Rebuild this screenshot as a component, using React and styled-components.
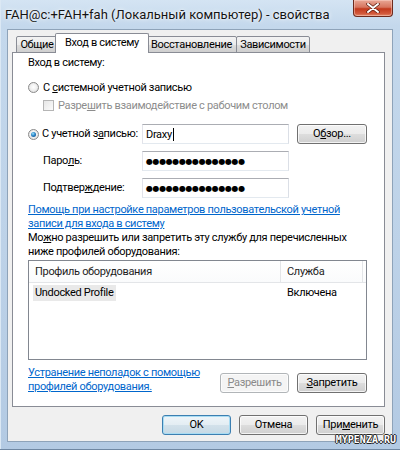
import styled, { createGlobalStyle } from "styled-components";

const GlobalStyle = createGlobalStyle`
  html, body {
    margin: 0;
    padding: 0;
    background: #b9cfe6;
  }
  body {
    font-family: Roboto, "Noto Sans", sans-serif;
    font-size: 11px;
    letter-spacing: -0.32px;
    color: #000;
  }
  * {
    box-sizing: border-box;
  }
`;

const tabs = [
    { title: "Общие", width: 42 },
    { title: "Вход в систему", width: 94, active: true },
    { title: "Восстановление", width: 91 },
    { title: "Зависимости", width: 74 },
];

function App() {
    return (
        <>
            <GlobalStyle />
            <Window>
                <TitleBar>
                    <Title>FAH@c:+FAH+fah (Локальный компьютер) - свойства</Title>
                    <CloseButton>
                        <svg width="14" height="10" viewBox="0 0 14 10">
                            <path
                                d="M2 1 L12 9 M12 1 L2 9"
                                stroke="#5a1c10"
                                strokeWidth="3.4"
                                strokeLinecap="round"
                            />
                            <path
                                d="M2 1 L12 9 M12 1 L2 9"
                                stroke="#fff"
                                strokeWidth="2"
                                strokeLinecap="round"
                            />
                        </svg>
                    </CloseButton>
                </TitleBar>

                <Client>
                    <TabStrip>
                        {tabs.map((t) => (
                            <Tab key={t.title} $width={t.width} $active={t.active}>
                                {t.title}
                            </Tab>
                        ))}
                    </TabStrip>

                    <Panel>
                        <Text>Вход в систему:</Text>

                        <OptionRow $top={10}>
                            <Radio />
                            <span>
                                С <Key>с</Key>истемной учетной записью
                            </span>
                        </OptionRow>

                        <OptionRow $top={4} $indent={15} $disabled>
                            <CheckBox />
                            <span>
                                Разре<Key>ш</Key>ить взаимодействие с рабочим столом
                            </span>
                        </OptionRow>

                        <Fields>
                            <FieldRow>
                                <FieldLabel>
                                    <Radio $checked />
                                    <span>
                                        С учетной з<Key>а</Key>писью:
                                    </span>
                                </FieldLabel>
                                <TextBox>
                                    Draxy<Caret />
                                </TextBox>
                                <Button $width={70}>
                                    О<Key>б</Key>зор...
                                </Button>
                            </FieldRow>
                            <FieldRow>
                                <FieldLabel $indent={15}>
                                    <span>
                                        Паро<Key>л</Key>ь:
                                    </span>
                                </FieldLabel>
                                <TextBox $password>●●●●●●●●●●●●●●●</TextBox>
                            </FieldRow>
                            <FieldRow>
                                <FieldLabel $indent={15}>
                                    <span>
                                        Подтвер<Key>ж</Key>дение:
                                    </span>
                                </FieldLabel>
                                <TextBox $password>●●●●●●●●●●●●●●●</TextBox>
                            </FieldRow>
                        </Fields>

                        <Link $top={5}>
                            Помощь при настройке параметров пользовательской учетной
                            <br />
                            записи для входа в систему
                        </Link>

                        <Paragraph>
                            Мо<Key>ж</Key>но разрешить или запретить эту службу для перечисленных
                            <br />
                            ниже профилей оборудования:
                        </Paragraph>

                        <ListBox>
                            <ListHeader>
                                <HeaderCell $width={252}>Профиль оборудования</HeaderCell>
                                <HeaderCell $width={82}>Служба</HeaderCell>
                            </ListHeader>
                            <ListRow>
                                <RowCell $width={252}>
                                    <Selection>Undocked Profile</Selection>
                                </RowCell>
                                <RowCell $width={82}>Включена</RowCell>
                            </ListRow>
                        </ListBox>

                        <BottomRow>
                            <Link>
                                Устранение неполадок с помощью
                                <br />
                                профилей оборудования.
                            </Link>
                            <ButtonGroup>
                                <Button $disabled>
                                    <Key>Р</Key>азрешить
                                </Button>
                                <Button $width={70}>
                                    <Key>З</Key>апретить
                                </Button>
                            </ButtonGroup>
                        </BottomRow>
                    </Panel>

                    <Footer>
                        <Button $default>OK</Button>
                        <Button>Отмена</Button>
                        <Button>
                            При<Key>м</Key>енить
                        </Button>
                    </Footer>
                </Client>

                <Watermark>MYPENZA.RU</Watermark>
            </Window>
        </>
    );
}

export default App;

const Window = styled.div`
    position: relative;
    width: 400px;
    height: 450px;
    display: flex;
    flex-direction: column;
    background: linear-gradient(180deg, #d4e4f3 0px, #c4d8ec 26px, #bdd2e8 55%, #b3cae3 100%);
    box-shadow: inset 0 -1px 0 #6f87a2, inset 1px 0 0 #dbe8f4;
    overflow: hidden;
`;

const TitleBar = styled.div`
    height: 29px;
    display: flex;
    align-items: flex-start;
    padding: 0 7px 0 5px;
`;

const Title = styled.div`
    padding-top: 6px;
    font-size: 13px;
    letter-spacing: 0;
    line-height: 18px;
    color: #141414;
    text-shadow: 0 0 5px rgba(255, 255, 255, 0.9), 0 0 2px rgba(255, 255, 255, 0.8);
    white-space: nowrap;
`;

const CloseButton = styled.div`
    margin-left: auto;
    width: 40px;
    height: 17px;
    display: flex;
    align-items: center;
    justify-content: center;
    border: 1px solid #6d2a1d;
    border-top: none;
    border-radius: 0 0 4px 4px;
    background: linear-gradient(180deg, #e9a796 0%, #d7755f 45%, #c2391d 55%, #d2593c 85%, #e28a6b 100%);
    box-shadow: inset 0 0 0 1px rgba(255, 220, 210, 0.45);
`;

const Client = styled.div`
    flex: 1;
    margin: 0 7px 8px;
    display: flex;
    flex-direction: column;
    background: #f0f0f0;
    border: 1px solid #8ea3b9;
    padding: 3px 7px 0 4px;
`;

const TabStrip = styled.div`
    height: 19px;
    display: flex;
    align-items: flex-start;
    padding-left: 4px;
`;

const Tab = styled.div`
    position: relative;
    width: ${(p) => p.$width}px;
    height: ${(p) => (p.$active ? 20 : 17)}px;
    margin-top: ${(p) => (p.$active ? 0 : 3)}px;
    margin-left: ${(p) => (p.$active ? -3 : -1)}px;
    margin-right: ${(p) => (p.$active ? -2 : 0)}px;
    z-index: ${(p) => (p.$active ? 2 : 1)};
    display: flex;
    align-items: ${(p) => (p.$active ? "flex-start" : "center")};
    justify-content: center;
    padding-top: ${(p) => (p.$active ? 2 : 0)}px;
    border: 1px solid #898c95;
    border-bottom: ${(p) => (p.$active ? "none" : "1px solid #898c95")};
    border-radius: 2px 2px 0 0;
    background: ${(p) =>
        p.$active ? "#ffffff" : "linear-gradient(180deg, #f3f3f3 0%, #ebebeb 50%, #dddddd 51%, #cfcfcf 100%)"};
    line-height: 14px;
    white-space: nowrap;

    &:first-child {
        margin-left: 0;
    }
`;

const Panel = styled.div`
    height: 355px;
    display: flex;
    flex-direction: column;
    background: #ffffff;
    border: 1px solid #898c95;
    padding: 3px 17px 0 15px;
`;

const Text = styled.div`
    line-height: 14px;
`;

const Key = styled.span`
    text-decoration: underline;
`;

const OptionRow = styled.div`
    display: flex;
    align-items: center;
    gap: 4px;
    height: 14px;
    margin-top: ${(p) => p.$top || 0}px;
    padding-left: ${(p) => p.$indent || 0}px;
    color: ${(p) => (p.$disabled ? "#8d8d8d" : "#000")};
`;

const Radio = styled.span`
    position: relative;
    flex: none;
    width: 11px;
    height: 11px;
    border-radius: 50%;
    border: 1px solid #8a8a8a;
    background: radial-gradient(circle at 50% 45%, #ffffff 0%, #f1f1f1 45%, #d3d3d3 100%);

    &::after {
        content: "";
        display: ${(p) => (p.$checked ? "block" : "none")};
        position: absolute;
        left: 2px;
        top: 2px;
        width: 5px;
        height: 5px;
        border-radius: 50%;
        background: radial-gradient(circle at 40% 35%, #9be3fb 0%, #2b86c9 45%, #0b3f78 100%);
    }
`;

const CheckBox = styled.span`
    flex: none;
    width: 11px;
    height: 11px;
    border: 1px solid #b5b5b5;
    background: linear-gradient(135deg, #e6e6e6, #fbfbfb);
`;

const Fields = styled.div`
    display: flex;
    flex-direction: column;
    gap: 7px;
    margin-top: 12px;
`;

const FieldRow = styled.div`
    display: flex;
    align-items: center;
    height: 20px;
`;

const FieldLabel = styled.div`
    width: 114px;
    display: flex;
    align-items: center;
    gap: 3px;
    padding-left: ${(p) => p.$indent || 0}px;
    line-height: 14px;
    white-space: nowrap;
`;

const TextBox = styled.div`
    width: 147px;
    height: 20px;
    margin-right: 8px;
    display: flex;
    align-items: center;
    padding-left: 3px;
    background: #ffffff;
    border: 1px solid;
    border-color: #abadb3 #dbdfe6 #e3e9ef #e2e3ea;
    font-family: ${(p) => (p.$password ? '"DejaVu Sans", sans-serif' : "inherit")};
    font-size: ${(p) => (p.$password ? "8px" : "11px")};
    letter-spacing: ${(p) => (p.$password ? "-0.4px" : "-0.32px")};
    white-space: nowrap;
    overflow: hidden;
`;

const Caret = styled.span`
    display: inline-block;
    width: 1px;
    height: 13px;
    margin-left: 1px;
    background: #000;
`;

const Link = styled.div`
    margin-top: ${(p) => p.$top || 0}px;
    line-height: 14px;
    color: #0066cc;
    text-decoration: underline;
    white-space: nowrap;
`;

const Paragraph = styled.div`
    line-height: 14px;
    white-space: nowrap;
`;

const ListBox = styled.div`
    margin-top: 1px;
    height: 100px;
    flex: none;
    background: #ffffff;
    border: 1px solid #828790;
`;

const ListHeader = styled.div`
    display: flex;
    height: 22px;
    border-bottom: 1px solid #e3e5e8;
    background: linear-gradient(180deg, #ffffff 0%, #fafbfc 100%);
`;

const HeaderCell = styled.div`
    width: ${(p) => p.$width}px;
    display: flex;
    align-items: center;
    padding-left: 6px;
    border-right: 1px solid #e3e5e8;
    color: #1e1e1e;
`;

const ListRow = styled.div`
    display: flex;
    margin-top: 2px;
    height: 16px;
`;

const RowCell = styled.div`
    width: ${(p) => p.$width}px;
    display: flex;
    align-items: center;
    padding-left: 4px;
    line-height: 16px;

    & + & {
        padding-left: 6px;
    }
`;

const Selection = styled.span`
    padding: 0 3px 0 2px;
    background: #e9e9e9;
`;

const BottomRow = styled.div`
    display: flex;
    justify-content: space-between;
    align-items: flex-start;
    margin-top: 6px;
`;

const ButtonGroup = styled.div`
    display: flex;
    gap: 8px;
    margin-top: 7px;
`;

const Button = styled.div`
    width: ${(p) => p.$width || 69}px;
    height: 20px;
    display: flex;
    align-items: center;
    justify-content: center;
    border: 1px solid ${(p) => (p.$disabled ? "#b1b5b8" : p.$default ? "#3c7fb1" : "#707070")};
    border-radius: 3px;
    color: ${(p) => (p.$disabled ? "#8a8a8a" : "#000")};
    background: ${(p) =>
        p.$disabled
            ? "#f4f4f4"
            : p.$default
            ? "linear-gradient(180deg, #eef5f9 0%, #e3edf3 50%, #d2e1ea 51%, #c6d9e5 100%)"
            : "linear-gradient(180deg, #f2f2f2 0%, #ebebeb 50%, #dddddd 51%, #cfcfcf 100%)"};
    box-shadow: inset 0 0 0 1px ${(p) => (p.$default ? "#a8dcf3" : "rgba(255, 255, 255, 0.75)")};
    line-height: 14px;
    white-space: nowrap;
`;

const Footer = styled.div`
    display: flex;
    justify-content: flex-end;
    gap: 8px;
    margin-top: 8px;
`;

const Watermark = styled.div`
    position: absolute;
    right: 4px;
    bottom: 5px;
    font-family: "DejaVu Sans Mono", monospace;
    font-size: 10px;
    font-weight: bold;
    line-height: 10px;
    letter-spacing: 0;
    color: #ffffff;
    text-shadow: 1px 0 0 #222, -1px 0 0 #222, 0 1px 0 #222, 0 -1px 0 #222;
`;
